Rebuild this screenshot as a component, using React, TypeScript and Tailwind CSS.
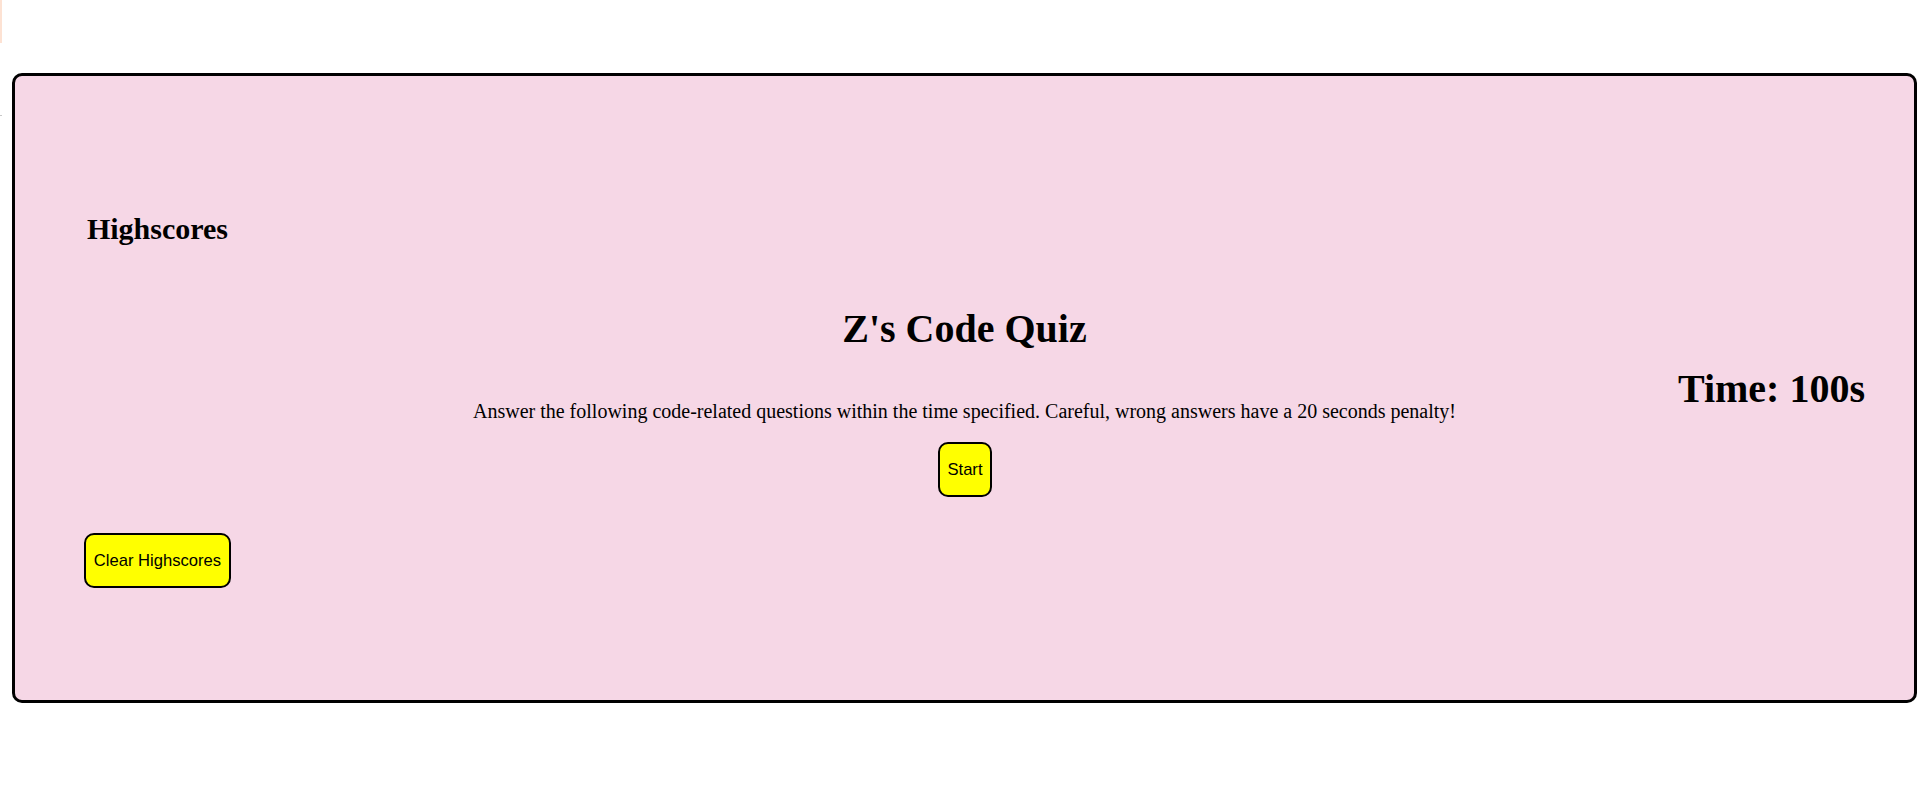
import React from "react";

export default function App() {
  return (
    <div className="relative min-h-[806px] bg-white font-['Liberation_Serif',serif] text-black">
      <div className="w-[2px] h-[43px] bg-[#fde2d3]" />
      <div className="absolute left-0 top-[115px] w-[2px] h-[1px] bg-[#c8c8c8]" />
      <div className="mt-[30px] ml-[12px] w-[1905px] h-[630px] border-[3px] border-black rounded-[10px] bg-[#f6d7e6] grid grid-cols-[1fr_auto_1fr] items-start">
        <div className="pl-[69px] flex">
          <div className="flex flex-col items-center">
            <h2 className="mt-[136px] text-[30px] leading-[34px] font-bold">Highscores</h2>
            <button className="mt-[287px] h-[55px] w-[147px] border-2 border-black rounded-[10px] bg-[#ffff00] font-['Liberation_Sans',Arial,sans-serif] text-[16.6px] leading-[18px] text-black whitespace-nowrap">
              Clear Highscores
            </button>
          </div>
        </div>
        <div className="flex flex-col items-center">
          <h1 className="mt-[229.5px] text-[40px] leading-[46px] font-bold">Z's Code Quiz</h1>
          <p className="mt-[48px] text-[20px] leading-[22px] whitespace-nowrap">
            Answer the following code-related questions within the time specified. Careful, wrong answers have a 20 seconds penalty!
          </p>
          <button className="mt-[20.6px] ml-[1px] h-[55px] w-[54px] border-2 border-black rounded-[10px] bg-[#ffff00] font-['Liberation_Sans',Arial,sans-serif] text-[16.6px] leading-[18px] text-black">
            Start
          </button>
        </div>
        <div className="flex justify-end pr-[49px]">
          <h2 className="mt-[289.5px] text-[40px] leading-[46px] font-bold">Time: 100s</h2>
        </div>
      </div>
    </div>
  );
}
